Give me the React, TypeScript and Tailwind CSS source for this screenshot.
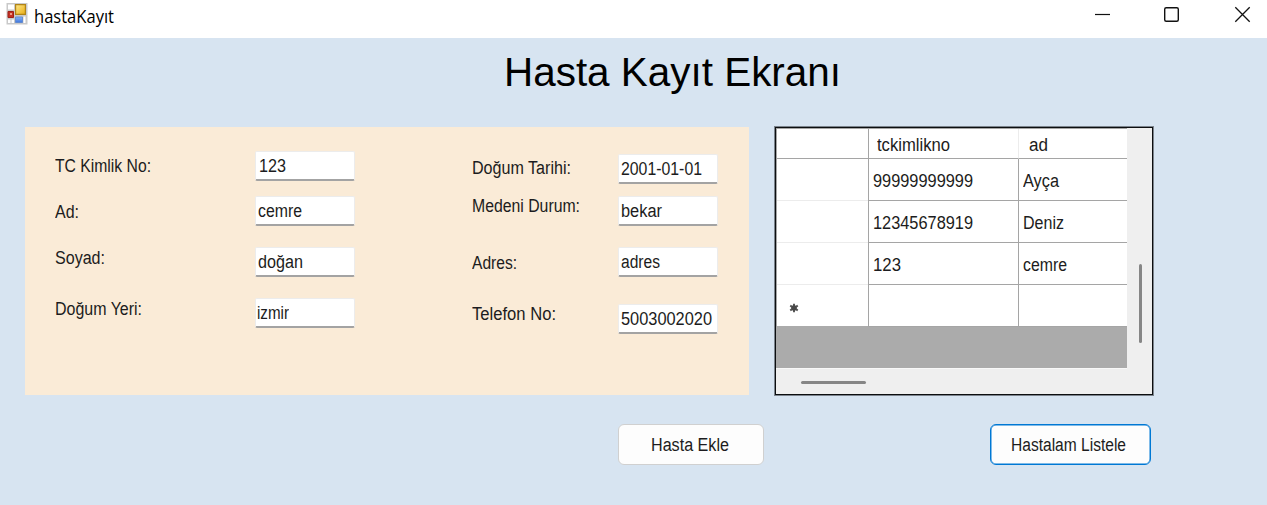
import { useLayoutEffect, useRef } from "react";
import type { ReactNode } from "react";
import { clsx } from "clsx";

/* Text whose advance is stretched or condensed to an exact width. */
function FitText({ width, className, children }: { width: number; className?: string; children: ReactNode }) {
  const ref = useRef<HTMLSpanElement>(null);
  useLayoutEffect(() => {
    const el = ref.current;
    if (!el) return;
    el.style.transform = "none";
    const natural = el.getBoundingClientRect().width;
    el.style.transform = `scaleX(${width / natural})`;
  }, [width]);
  return (
    <span ref={ref} className={clsx("inline-block origin-left whitespace-pre", className)}>
      {children}
    </span>
  );
}

function Label({ text, width, className }: { text: string; width: number; className: string }) {
  return (
    <div className={clsx("h-5", className)}>
      <FitText width={width}>{text}</FitText>
    </div>
  );
}

function Field({ value, width, className, pad = "pl-[3px]" }: { value: string; width: number; className: string; pad?: string }) {
  return (
    <div
      className={clsx(
        "h-[30px] w-[100px] rounded-[2px] border border-b-2 border-[#ececec] border-b-[#a3a3a3] bg-white pt-[4px]",
        pad,
        className,
      )}
    >
      <FitText width={width}>{value}</FitText>
    </div>
  );
}

function Row({ id, idWidth, name, nameWidth, last }: { id?: string; idWidth?: number; name?: string; nameWidth?: number; last?: boolean }) {
  return (
    <div className="flex h-[42px]">
      <div className={clsx("flex w-[91px] items-center border-b pl-[12px]", last ? "border-[#ababab]" : "border-[#ececec]")}>
        {last && (
          <svg width="10" height="10" viewBox="0 0 10 10" className="mt-[4px]" stroke="#585858" strokeWidth="2">
            <path d="M5 .8v8.400M1.200 2.700l7.600 4.600M1.200 7.300l7.600-4.600" />
            <circle cx="5" cy="5" r="2.800" fill="#484848" stroke="none" />
          </svg>
        )}
      </div>
      <div className="w-[150px] border-b border-l border-b-[#a5a5a5] border-l-[#a5a5a5] pt-[12px] pl-[4px]">
        {id && <FitText width={idWidth ?? 0}>{id}</FitText>}
      </div>
      <div className="w-[109px] border-b border-l border-b-[#a5a5a5] border-l-[#a5a5a5] pt-[12px] pl-[4px]">
        {name && <FitText width={nameWidth ?? 0}>{name}</FitText>}
      </div>
    </div>
  );
}

export default function App() {
  return (
    <div className="flex h-[505px] w-[1267px] flex-col overflow-hidden bg-[#d7e4f1] font-['Liberation_Sans',sans-serif] text-[18px] leading-5 text-[#1c1c20]">
      <header className="flex h-[38px] shrink-0 bg-white">
        <svg width="22" height="22" viewBox="0 0 22 22" className="mt-[3px] ml-[6px] shrink-0">
          <defs>
            <linearGradient id="gold" x1="0" y1="0" x2="1" y2="1">
              <stop offset="0" stopColor="#ffe98c" />
              <stop offset="1" stopColor="#e9ad13" />
            </linearGradient>
            <linearGradient id="blue" x1="0" y1="0" x2="0" y2="1">
              <stop offset="0" stopColor="#88b5f5" />
              <stop offset="1" stopColor="#3f75dc" />
            </linearGradient>
          </defs>
          <path fill="#c9c9c9" d="M.5 0h21v21.5H.5z" />
          <path fill="#fff" d="M2 1.500h6v5H2zM2 16.500h2.500v3.500H2zM5.500 16.500H8v3.500H5.500zM17.500 13.500h2V20h-2z" />
          <path fill="url(#gold)" stroke="#b18416" strokeWidth="1.200" d="M9.600 1.600h9.800v9.800H9.600z" />
          <path fill="#c43022" stroke="#9c2018" d="M2 8.500h5.500v6H2z" />
          <path fill="#ee9a84" d="M4 10h2v2H4z" />
          <path fill="url(#blue)" stroke="#5884ce" strokeWidth=".8" d="M9.500 14h7v5.500h-7z" />
        </svg>
        <div className="mt-[6px] ml-[6px] font-['Open_Sans',sans-serif] text-[17.5px] text-black">
          <FitText width={80}>hastaKayıt</FitText>
        </div>
        <svg width="160" height="20" viewBox="0 0 160 20" className="mt-[5px] mr-[15px] ml-auto" fill="none" stroke="#111">
          <path d="M3 9.500h15" strokeWidth="1.200" />
          <rect x="72.700" y="2.700" width="13.600" height="13.600" rx="1.500" strokeWidth="1.400" />
          <path d="m143.300 2.300 14.400 14.400m0-14.400-14.400 14.400" strokeWidth="1.300" />
        </svg>
      </header>

      <h1 className="mt-[10px] ml-[504px] h-[49px] text-[40px] leading-[48px] text-black">
        <FitText width={337}>Hasta Kayıt Ekranı</FitText>
      </h1>

      <main className="mt-[30px] flex">
        <section className="ml-[25px] flex h-[268px] w-[724px] bg-[#faebd7]">
          <div className="ml-[30px] w-[200px]">
            <Label className="mt-[29px]" text="TC Kimlik No:" width={96} />
            <Label className="mt-[26px]" text="Ad:" width={24} />
            <Label className="mt-[26px]" text="Soyad:" width={50} />
            <Label className="mt-[31px]" text="Doğum Yeri:" width={87} />
          </div>
          <div className="w-[217px]">
            <Field className="mt-[24px]" value="123" width={27} />
            <Field className="mt-[15px]" value="cemre" width={44} pad="pl-[2px]" />
            <Field className="mt-[21px]" value="doğan" width={45} pad="pl-[2px]" />
            <Field className="mt-[21px]" value="izmir" width={32} pad="pl-[1px]" />
          </div>
          <div className="w-[146px]">
            <Label className="mt-[31px]" text="Doğum Tarihi:" width={99} />
            <Label className="mt-[18px]" text="Medeni Durum:" width={108} />
            <Label className="mt-[37px]" text="Adres:" width={45} />
            <Label className="mt-[31px]" text="Telefon No:" width={84} />
          </div>
          <div>
            <Field className="mt-[27px]" value="2001-01-01" width={81} pad="pl-[2px]" />
            <Field className="mt-[12px]" value="bekar" width={41} pad="pl-[2px]" />
            <Field className="mt-[21px]" value="adres" width={39} pad="pl-[2px]" />
            <Field className="mt-[27px]" value="5003002020" width={91} pad="pl-[2px]" />
          </div>
        </section>

        <section className="-mt-px ml-[25px] flex h-[270px] w-[380px] border border-[#7b838c] bg-[#efefef]">
          <div className="flex flex-1 border border-[#0c0e10]">
            <div className="flex w-[351px] flex-col">
              <div className="h-[199px] border-t border-l border-[#a5a5a5] bg-white">
                <div className="flex h-[30px]">
                  <div className="w-[91px] border-b border-[#a5a5a5]" />
                  <div className="w-[150px] border-b border-l border-b-[#a5a5a5] border-l-[#a5a5a5] pt-[6px] pl-[8px]">
                    <FitText width={73}>tckimlikno</FitText>
                  </div>
                  <div className="w-[109px] border-b border-l border-b-[#a5a5a5] border-l-[#ececec] pt-[6px] pl-[10px]">
                    <FitText width={19}>ad</FitText>
                  </div>
                </div>
                <Row id="99999999999" idWidth={100} name="Ayça" nameWidth={36} />
                <Row id="12345678919" idWidth={100} name="Deniz" nameWidth={41} />
                <Row id="123" idWidth={28} name="cemre" nameWidth={44} />
                <Row last />
              </div>
              <div className="h-[41px] bg-[#ababab]" />
              <div className="h-[26px] border-t border-[#f8f8f8] pt-[12px] pl-[25px]">
                <div className="h-[3px] w-[65px] rounded-full bg-[#868686]" />
              </div>
            </div>
            <div className="flex-1 pt-[136px] pl-[12px]">
              <div className="h-[79px] w-[3px] rounded-full bg-[#868686]" />
            </div>
          </div>
        </section>
      </main>

      <footer className="mt-[28px] flex">
        <button className="ml-[618px] h-[41px] w-[146px] rounded-[6px] border border-[#d0d0d0] bg-[#fdfdfd] pl-[32px] text-left">
          <FitText width={78}>Hasta Ekle</FitText>
        </button>
        <button className="ml-[226px] h-[41px] w-[161px] rounded-[6px] border-[1.5px] border-[#0078d4] bg-[#fdfdfd] pl-[20px] text-left shadow-[inset_0_0_0_0.5px_#0078d4]">
          <FitText width={115}>Hastalam Listele</FitText>
        </button>
      </footer>
    </div>
  );
}
